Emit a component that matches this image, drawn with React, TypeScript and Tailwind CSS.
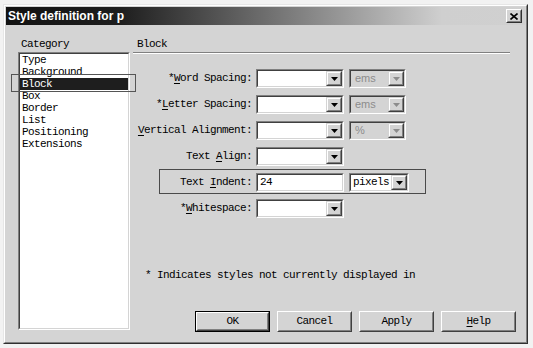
import React from 'react';

const mono = "font-['Liberation_Mono',monospace] text-[11px] tracking-[-0.6px] text-black";

function Arrow({ disabled }: { disabled?: boolean }) {
  return (
    <svg width="7" height="4" viewBox="0 0 7 4" aria-hidden="true">
      <polygon points="0,0 7,0 3.5,4" fill={disabled ? '#8c8c8c' : '#000'} />
    </svg>
  );
}

function DropButton({ disabled }: { disabled?: boolean }) {
  return (
    <div className="h-full w-[16px] border border-t-[#d4d4d4] border-l-[#d4d4d4] border-b-[#404040] border-r-[#404040] bg-[#d4d4d4]">
      <div className="flex h-full w-full items-center justify-center border border-t-white border-l-white border-b-[#808080] border-r-[#808080]">
        <Arrow disabled={disabled} />
      </div>
    </div>
  );
}

function Combo({
  width,
  value,
  disabled,
  noButton,
}: {
  width: string;
  value?: string;
  disabled?: boolean;
  noButton?: boolean;
}) {
  return (
    <div className={`${width} h-[19px] border border-t-[#808080] border-l-[#808080] border-b-white border-r-white`}>
      <div
        className={`flex h-full border border-t-[#404040] border-l-[#404040] border-b-[#d4d4d4] border-r-[#d4d4d4] ${
          disabled ? 'bg-[#d4d4d4]' : 'bg-white'
        }`}
      >
        <div
          className={
            disabled
              ? "flex-1 pl-[4px] font-['Liberation_Sans',sans-serif] text-[11px] leading-[15px] text-[#8c8c8c]"
              : `flex-1 pl-[2px] leading-[15px] ${mono}`
          }
        >
          {value}
        </div>
        {!noButton && <DropButton disabled={disabled} />}
      </div>
    </div>
  );
}

function Row({
  pre,
  k,
  post,
  value,
  unit,
  unitDisabled,
  noButton,
  focus,
}: {
  pre: string;
  k: string;
  post: string;
  value?: string;
  unit?: string;
  unitDisabled?: boolean;
  noButton?: boolean;
  focus?: boolean;
}) {
  return (
    <div className="relative flex h-[19px] items-center">
      {focus && (
        <span className="pointer-events-none absolute left-[26px] top-[-4px] h-[25px] w-[267px] border border-[#4a4a4a]" />
      )}
      <div className={`w-[120px] pr-[1px] text-right leading-[19px] ${mono}`}>
        {pre}
        <span className="underline underline-offset-2">{k}</span>
        {post}
      </div>
      <div className="ml-[3px]">
        <Combo width="w-[88px]" value={value} noButton={noButton} />
      </div>
      {unit !== undefined && (
        <div className="ml-[5px]">
          <Combo width={unitDisabled ? 'w-[57px]' : 'w-[60px]'} value={unit} disabled={unitDisabled} />
        </div>
      )}
    </div>
  );
}

function Button({ label, k, rest, def }: { label?: string; k?: string; rest?: string; def?: boolean }) {
  return (
    <div className={`h-[21px] w-[75px] ${def ? 'border border-black' : ''}`}>
      <div className="h-full w-full border border-t-white border-l-white border-b-[#404040] border-r-[#404040] bg-[#d4d4d4]">
        <div className={`flex h-full w-full items-center justify-center border border-t-[#d4d4d4] border-l-[#d4d4d4] border-b-[#808080] border-r-[#808080] ${mono}`}>
          {label}
          {k && <span className="underline underline-offset-2">{k}</span>}
          {rest}
        </div>
      </div>
    </div>
  );
}

const categories = ['Type', 'Background', 'Block', 'Box', 'Border', 'List', 'Positioning', 'Extensions'];

export default function App() {
  return (
    <div className="h-[348px] w-[533px] overflow-hidden bg-[#f2f2f2] pl-[3px] pt-[4px]">
      <div className="h-[340px] w-[525px] border border-t-[#e6e6e6] border-l-[#e6e6e6] border-b-[#303030] border-r-[#303030] bg-[#d4d4d4]">
        <div className="h-full w-full border border-t-white border-l-white border-b-[#808080] border-r-[#808080] p-[1px]">
          {/* title bar */}
          <div className="flex h-[18px] items-center justify-between bg-[linear-gradient(90deg,#121212_0%,#1e1e1e_22%,#cfcfcf_84%,#d0d0d0_100%)] pl-[2px] pr-[3px]">
            <span className="font-['Liberation_Sans',sans-serif] text-[12px] font-bold leading-none text-white">
              Style definition for p
            </span>
            <div className="h-[14px] w-[16px] border border-t-white border-l-white border-b-[#303030] border-r-[#303030] bg-[#d4d4d4]">
              <div className="flex h-full w-full items-center justify-center border border-t-[#d4d4d4] border-l-[#d4d4d4] border-b-[#808080] border-r-[#808080]">
                <svg width="8" height="7" viewBox="0 0 8 7" aria-hidden="true">
                  <path d="M0.5 0.5 L7.5 6.5 M7.5 0.5 L0.5 6.5" stroke="#000" strokeWidth="1.6" />
                </svg>
              </div>
            </div>
          </div>

          {/* body */}
          <div className="flex">
            {/* left column */}
            <div className="pl-[12px]">
              <div className={`mt-[13px] h-[12px] pl-[3px] leading-[12px] ${mono}`}>Category</div>
              <div className="mt-[2px] h-[278px] w-[112px] border border-t-[#808080] border-l-[#808080] border-b-white border-r-white">
                <div className="relative h-full w-full border border-t-[#404040] border-l-[#404040] border-b-[#d4d4d4] border-r-[#d4d4d4] bg-white">
                  {categories.map((c) => (
                    <div
                      key={c}
                      className={`h-[12px] pl-[2px] leading-[12px] ${mono} ${c === 'Block' ? 'bg-[#1e1e1e] !text-white' : ''}`}
                    >
                      {c}
                    </div>
                  ))}
                  <span className="pointer-events-none absolute left-[-9px] top-[20px] h-[18px] w-[125px] border border-[#555]" />
                </div>
              </div>
            </div>

            {/* right column */}
            <div className="ml-[3px] flex-1">
              <div className={`mt-[13px] h-[12px] pl-[4px] leading-[12px] ${mono}`}>Block</div>
              <div className="mt-[2px] h-[2px] w-[377px] border-t border-b border-t-[#808080] border-b-white" />

              <div className="mt-[15px] flex flex-col gap-[7px]">
                <Row pre="*" k="W" post="ord Spacing:" unit="ems" unitDisabled />
                <Row pre="*" k="L" post="etter Spacing:" unit="ems" unitDisabled />
                <Row pre="" k="V" post="ertical Alignment:" unit="%" unitDisabled />
                <Row pre="Text " k="A" post="lign:" />
                <Row pre="Text " k="I" post="ndent:" value="24" noButton unit="pixels" focus />
                <Row pre="*" k="W" post="hitespace:" />
              </div>

              <div className={`mt-[51px] pl-[12px] leading-[12px] ${mono}`}>
                * Indicates styles not currently displayed in
              </div>

              <div className="mt-[30px] flex gap-[7px] pl-[62px]">
                <Button label="OK" def />
                <Button label="Cancel" />
                <Button label="Apply" />
                <Button k="H" rest="elp" />
              </div>
            </div>
          </div>
        </div>
      </div>
    </div>
  );
}
